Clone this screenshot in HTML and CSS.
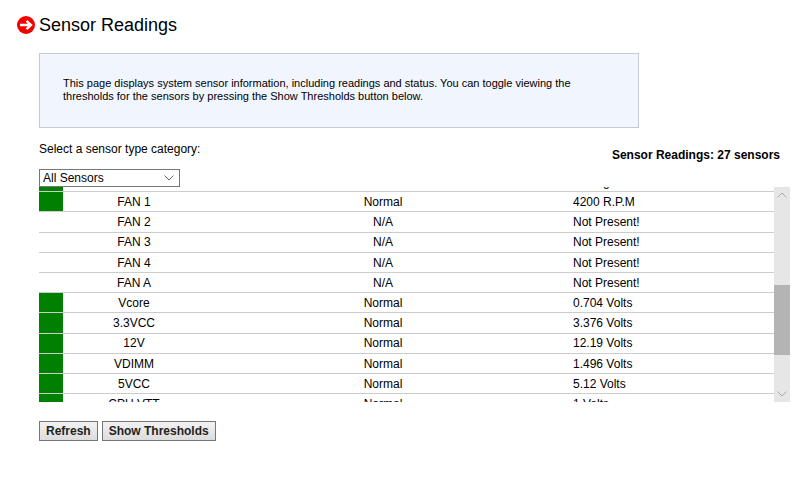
FILE: index.html
```html
<!DOCTYPE html>
<html lang="en">
<head>
  <meta charset="UTF-8">
  <title>Sensor Readings</title>
  <link rel="stylesheet" href="styles.css">
</head>
<body>
  <div class="page__title">
    <svg class="title__icon" width="18" height="18" viewBox="0 0 18 18">
      <circle cx="9" cy="9" r="9" fill="#f40000"/>
      <path d="M3 9H13.5M9.5 4.8L14 9L9.5 13.2" fill="none" stroke="#fff" stroke-width="2.4"/>
    </svg>
    <h1>Sensor Readings</h1>
  </div>

  <div class="content">
    <!-- description -->
    <div class="info__box">
      <p>This page displays system sensor information, including readings and status. You can toggle viewing the thresholds for the sensors by pressing the Show Thresholds button below.</p>
    </div>

    <!-- category filter -->
    <div class="filter__sec">
      <div class="filter__left">
        <label for="category">Select a sensor type category:</label>
        <select id="category">
          <option>All Sensors</option>
        </select>
      </div>
      <strong class="sensor__count">Sensor Readings: 27 sensors</strong>
    </div>

    <!-- sensor table, scrolled down to the fans -->
    <div class="table__sec">
      <div class="table__view">
        <table class="sensor__table">
          <colgroup>
            <col class="col__status"><col class="col__name"><col class="col__state"><col>
          </colgroup>
          <tbody>
            <tr><td class="ok"></td><td>VRM</td><td>Normal</td><td>35 degrees C</td></tr>
            <tr><td class="ok"></td><td>FAN 1</td><td>Normal</td><td>4200 R.P.M</td></tr>
            <tr><td></td><td>FAN 2</td><td>N/A</td><td>Not Present!</td></tr>
            <tr><td></td><td>FAN 3</td><td>N/A</td><td>Not Present!</td></tr>
            <tr><td></td><td>FAN 4</td><td>N/A</td><td>Not Present!</td></tr>
            <tr><td></td><td>FAN A</td><td>N/A</td><td>Not Present!</td></tr>
            <tr><td class="ok"></td><td>Vcore</td><td>Normal</td><td>0.704 Volts</td></tr>
            <tr><td class="ok"></td><td>3.3VCC</td><td>Normal</td><td>3.376 Volts</td></tr>
            <tr><td class="ok"></td><td>12V</td><td>Normal</td><td>12.19 Volts</td></tr>
            <tr><td class="ok"></td><td>VDIMM</td><td>Normal</td><td>1.496 Volts</td></tr>
            <tr><td class="ok"></td><td>5VCC</td><td>Normal</td><td>5.12 Volts</td></tr>
            <tr><td class="ok"></td><td>CPU VTT</td><td>Normal</td><td>1 Volts</td></tr>
          </tbody>
        </table>
      </div>
      <!-- scrollbar -->
      <div class="scroll__bar">
        <svg class="scroll__arrow" width="16" height="17" viewBox="0 0 16 17"><path d="M3.5 10.5L8 6L12.5 10.5" fill="none" stroke="#a8a8a8"/></svg>
        <div class="scroll__track"><div class="scroll__thumb"></div></div>
        <svg class="scroll__arrow" width="16" height="17" viewBox="0 0 16 17"><path d="M3.5 6.5L8 11L12.5 6.5" fill="none" stroke="#a8a8a8"/></svg>
      </div>
    </div>

    <div class="btn__sec">
      <button type="button">Refresh</button>
      <button type="button">Show Thresholds</button>
    </div>
  </div>
</body>
</html>
```

FILE: styles.css
```css
* {
  margin: 0;
  padding: 0;
  box-sizing: border-box;
}

body {
  font-family: "Liberation Sans", Arial, sans-serif;
  font-size: 12px;
  color: #000;
  background: #fff;
}

.page__title {
  display: flex;
  align-items: center;
  gap: 4px;
  height: 20px;
  margin: 15px 0 0 17px;
}

.title__icon {
  flex: none;
}

h1 {
  font-size: 18px;
  font-weight: normal;
  line-height: 20px;
}

.content {
  margin: 18px 14px 0 39px;
}

.info__box {
  width: 600px;
  height: 75px;
  padding: 23px;
  background: #f1f5fe;
  border: 1px solid #c5c9d0;
  font-size: 11px;
  line-height: 13px;
}

.filter__sec {
  display: flex;
  justify-content: space-between;
  margin-top: 14px;
  padding-right: 10px;
}

.filter__left {
  display: flex;
  flex-direction: column;
  gap: 12px;
}

.filter__left label {
  line-height: 15px;
}

select {
  appearance: none;
  width: 141px;
  height: 18px;
  padding-left: 3px;
  border: 1px solid #767676;
  border-radius: 0;
  background: #fff url("data:image/svg+xml,%3Csvg xmlns='http://www.w3.org/2000/svg' width='10' height='6'%3E%3Cpath d='M.5.5L5 5L9.5.5' fill='none' stroke='%23666'/%3E%3C/svg%3E") no-repeat right 5px center;
  font-family: inherit;
  font-size: 12px;
  color: #000;
}

.sensor__count {
  margin-top: 6px;
  line-height: 15px;
}

.table__sec {
  display: flex;
  width: 751px;
  height: 215px;
}

.table__view {
  flex: 1;
  overflow: hidden;
}

.sensor__table {
  width: 735px;
  margin-top: -15.5px;
  border-collapse: collapse;
  table-layout: fixed;
}

.col__status {
  width: 24px;
}

.col__name {
  width: 142px;
}

.col__state {
  width: 356px;
}

.sensor__table td {
  height: 20.2px;
  padding: 0.6px 0 0;
  border-bottom: 1px solid #ccc;
  text-align: center;
  font-size: 12px;
  line-height: 14px;
}

.sensor__table td:last-child {
  padding-left: 12px;
  text-align: left;
}

.sensor__table .ok {
  background: #008000;
}

.scroll__bar {
  display: flex;
  flex-direction: column;
  width: 16px;
  background: #e6e6e6;
}

.scroll__arrow {
  flex: none;
}

.scroll__track {
  flex: 1;
  padding-top: 81px;
}

.scroll__thumb {
  height: 70px;
  background: #b4b4b4;
}

.btn__sec {
  display: flex;
  gap: 4px;
  margin-top: 19px;
}

button {
  height: 20px;
  padding: 0 6px;
  border: 1px solid #767676;
  background: linear-gradient(#f2f2f2, #dcdcdc);
  font-family: inherit;
  font-size: 12px;
  font-weight: bold;
  color: #222;
}
```
